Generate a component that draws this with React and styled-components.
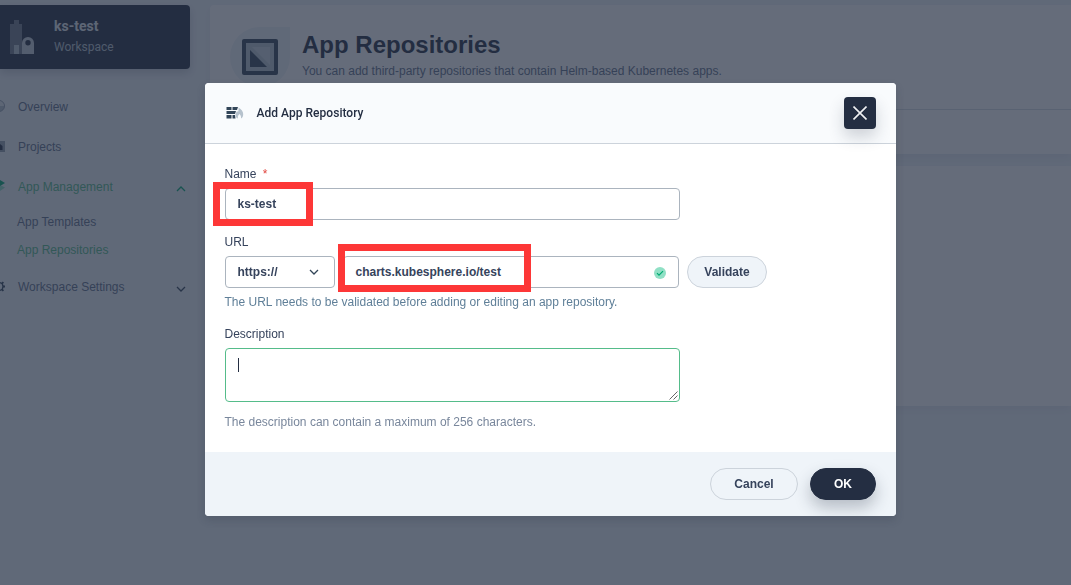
import React from 'react';
import styled, { createGlobalStyle } from 'styled-components';

const arial = '"Liberation Sans", Arial, sans-serif';
const roboto = 'Roboto, "Liberation Sans", sans-serif';

const GlobalStyle = createGlobalStyle`
  *, *::before, *::after { box-sizing: border-box; }
  body { margin: 0; overflow: hidden; background: #eff4f9; font-family: ${arial}; font-size: 12px; color: #242e42; }
  button, input, textarea { font: inherit; margin: 0; }
  svg { display: block; flex: none; }
  h1, p { margin: 0; }
`;

const Page = styled.div`
  display: grid;
  grid-template-columns: 190px 1fr;
  column-gap: 20px;
  height: 585px;
  padding-top: 5px;
  overflow: hidden;
`;
const Sidebar = styled.aside`
  display: flex;
  flex-direction: column;
`;
const Workspace = styled.div`
  display: flex;
  align-items: center;
  height: 64px;
  padding-left: 10px;
  gap: 20px;
  border-radius: 0 4px 4px 0;
  background: #242e42;
  box-shadow: 0 4px 8px rgba(36, 46, 66, 0.2);
  color: #fff;
`;
const WorkspaceText = styled.div`
  display: flex;
  flex-direction: column;
  line-height: 20px;
  color: #b6c2cd;
  font-family: ${roboto};
`;
const WorkspaceName = styled.strong`
  margin-top: -1px;
  font: 700 14px/21px ${roboto};
  color: #e3e9ef;
`;
const Nav = styled.nav`
  display: flex;
  flex-direction: column;
  padding-top: 18px;
`;
const NavItem = styled.a`
  display: flex;
  align-items: center;
  height: 40px;
  padding-right: 4px;
  color: ${(p) => (p.$active ? '#55bc8a' : '#5f708a')};
`;
const NavIcon = styled.span`
  display: flex;
  width: 18px;
`;
const NavLabel = styled.span`
  flex: 1;
`;
const SubNav = styled.div`
  display: flex;
  flex-direction: column;
  padding: 1px 0 3px 17px;
`;
const SubItem = styled.a`
  height: 28px;
  line-height: 28px;
  color: ${(p) => (p.$active ? '#55bc8a' : '#5f708a')};
`;
const Main = styled.main`
  display: flex;
  flex-direction: column;
  gap: 12px;
`;
const Card = styled.section`
  height: ${(p) => p.$height}px;
  background: #fff;
  border-radius: 4px 0 0 4px;
  box-shadow: 0 4px 8px rgba(36, 46, 66, 0.06);
`;
const Banner = styled.div`
  display: flex;
  height: 105px;
  padding: 22px 20px 0;
  gap: 12px;
  border-bottom: 1px solid #d8dee5;
`;
const BannerIcon = styled.div`
  display: grid;
  place-items: center;
  width: 60px;
  height: 60px;
  border-radius: 30px 0 30px 30px;
  background: #eff4f9;
`;
const BannerTitle = styled.h1`
  padding-top: 2px;
  font: 700 24px/32px ${arial};
  color: #242e42;
`;
const BannerText = styled.p`
  line-height: 20px;
  color: #5f708a;
`;
const Mask = styled.div`
  position: fixed;
  inset: 0;
  background: rgba(36, 46, 66, 0.7);
`;
const Modal = styled.div`
  position: absolute;
  left: 205px;
  top: 83px;
  display: flex;
  flex-direction: column;
  width: 691px;
  height: 433px;
  border-radius: 4px;
  overflow: hidden;
  background: #fff;
  box-shadow: 0 4px 8px rgba(36, 46, 66, 0.2);
`;
const ModalHeader = styled.header`
  display: flex;
  align-items: center;
  flex: none;
  height: 61px;
  padding: 0 20px;
  border-bottom: 1px solid #ccd3db;
  background: #f9fbfd;
`;
const ModalTitle = styled.div`
  flex: 1;
  padding-left: 11.5px;
  font: 500 12px/20px ${roboto};
  letter-spacing: 0.03px;
`;
const CloseButton = styled.button`
  display: grid;
  place-items: center;
  width: 32px;
  height: 32px;
  padding: 0;
  border: 0;
  border-radius: 4px;
  background: #242e42;
  box-shadow: 0 8px 16px rgba(36, 46, 66, 0.2);
`;
const Form = styled.div`
  display: flex;
  flex: 1;
  flex-direction: column;
  padding: 20px 20px 0;
`;
const Field = styled.div`
  display: flex;
  flex: none;
  flex-direction: column;
  height: ${(p) => p.$height}px;
`;
const Label = styled.label`
  margin: 0 0 4px -0.5px;
  line-height: 20px;
  color: #36435c;
`;
const Required = styled.span`
  margin-left: 3px;
  color: #e0443e;
`;
const Help = styled.p`
  margin: ${(p) => p.$gap}px 0 0 -0.5px;
  line-height: 20px;
  color: ${(p) => p.$color};
`;
const Row = styled.div`
  display: flex;
`;
const InputBox = styled.div`
  display: flex;
  align-items: center;
  width: ${(p) => p.$width}px;
  height: 32px;
  margin-right: 8px;
  padding: 0 12px 0 11.5px;
  border: 1px solid #abb4be;
  border-radius: 4px;
  background: #fff;
  font-weight: 700;
  color: #36435c;
`;
const Value = styled.span`
  flex: 1;
`;
const TextArea = styled.div`
  display: flex;
  justify-content: space-between;
  align-items: flex-end;
  width: 455px;
  height: 54px;
  padding: 0 1px 1px 12px;
  border: 1px solid #55bc8a;
  border-radius: 4px;
`;
const Caret = styled.i`
  align-self: flex-start;
  width: 1px;
  height: 14px;
  margin-top: 9px;
  background: #242e42;
`;
const Button = styled.button`
  width: ${(p) => p.$width}px;
  height: 32px;
  padding: 0;
  border: 1px solid ${(p) => (p.$primary ? '#242e42' : '#ccd3db')};
  border-radius: 16px;
  background: ${(p) => (p.$primary ? '#242e42' : '#eff4f9')};
  box-shadow: ${(p) => (p.$primary ? '0 8px 16px rgba(36, 46, 66, 0.28)' : 'none')};
  color: ${(p) => (p.$primary ? '#fff' : '#36435c')};
  font-weight: 700;
`;
const ModalFooter = styled.footer`
  display: flex;
  align-items: center;
  justify-content: flex-end;
  flex: none;
  gap: 12px;
  height: 64px;
  padding-right: 20px;
  background: #eff4f9;
`;
const Highlight = styled.div`
  position: absolute;
  left: ${(p) => p.$x}px;
  top: ${(p) => p.$y}px;
  width: ${(p) => p.$w}px;
  height: ${(p) => p.$h}px;
  border: 7px solid #fd3737;
`;

const Chevron = ({ up, color }) => (
  <svg width="10" height="10" viewBox="0 -4 10 10" fill="none" stroke={color} strokeWidth="1.3">
    <path d={up ? 'M1 5 5 1l4 4' : 'M1 1l4 4 4-4'} />
  </svg>
);

export default function App() {
  return (
    <>
      <GlobalStyle />
      <Page>
        <Sidebar>
          <Workspace>
            <svg width="24" height="34" viewBox="0 0 24 34">
              <path d="M0 4h4V0h5v4h3v30H0z" fill="#6f7a8b" />
              <path d="M4 25h5v9H4z" fill="#b6c2cd" />
              <path fillRule="evenodd" d="M12 34V23a6 6 0 0 1 12 0v11zM18 20a2.7 2.7 0 1 0 0 5.4 2.7 2.7 0 0 0 0-5.4z" fill="#c4ccd5" />
            </svg>
            <WorkspaceText>
              <WorkspaceName>ks-test</WorkspaceName>
              <span>Workspace</span>
            </WorkspaceText>
          </Workspace>
          <Nav>
            <NavItem>
              <NavIcon>
                <svg width="6" height="14" viewBox="0 0 6 14">
                  <circle cx="-1" cy="6" r="5.500" fill="#b6c2cd" stroke="#94a1b0" />
                  <path d="M-1 1a5 5 0 0 1 5 5h-5z" fill="#e3e9ef" />
                </svg>
              </NavIcon>
              <NavLabel>Overview</NavLabel>
            </NavItem>
            <NavItem>
              <NavIcon>
                <svg width="6" height="12" viewBox="0 0 6 12">
                  <path d="M0 0h5v11H0z" fill="#94a1b0" />
                  <path d="M0 3l2.500 2v4H0z" fill="#242e42" />
                </svg>
              </NavIcon>
              <NavLabel>Projects</NavLabel>
            </NavItem>
            <NavItem $active>
              <NavIcon>
                <svg width="6" height="14" viewBox="0 0 6 14">
                  <path d="M0 5l5 2.500L0 11z" fill="#90e0c5" />
                  <path d="M0 0l5 3-5 3z" fill="#00aa72" />
                </svg>
              </NavIcon>
              <NavLabel>App Management</NavLabel>
              <Chevron up color="#00aa72" />
            </NavItem>
            <SubNav>
              <SubItem>App Templates</SubItem>
              <SubItem $active>App Repositories</SubItem>
            </SubNav>
            <NavItem>
              <NavIcon>
                <svg width="6" height="14" viewBox="0 0 6 14" fill="none" stroke="#324558">
                  <circle cx="-1" cy="6.500" r="4" strokeWidth="1.4" />
                  <path d="M3 6.500h2M1.800 3.700l1.600-1.600M1.800 9.300l1.600 1.600" strokeWidth="1.800" />
                </svg>
              </NavIcon>
              <NavLabel>Workspace Settings</NavLabel>
              <Chevron color="#324558" />
            </NavItem>
          </Nav>
        </Sidebar>
        <Main>
          <Card $height={149}>
            <Banner>
              <BannerIcon>
                <svg width="36" height="36" viewBox="0 0 36 36">
                  <rect width="36" height="36" rx="2" fill="#324558" />
                  <path d="M4 4h28v28H4z" fill="#b6c2cd" />
                  <path d="M10 8h18v18z" fill="#c9d3dc" />
                  <path d="M8 11v17h17z" fill="#324558" />
                </svg>
              </BannerIcon>
              <div>
                <BannerTitle>App Repositories</BannerTitle>
                <BannerText>You can add third-party repositories that contain Helm-based Kubernetes apps.</BannerText>
              </div>
            </Banner>
          </Card>
          <Card $height={240} />
        </Main>
      </Page>
      <Mask />
      <Modal>
        <ModalHeader>
          <svg width="20" height="20" viewBox="0 0 20 20">
            <path d="M1.500 4h5v3h-5zM7.500 4h5.500l-1 3h-4.500zM1.500 8h9.500l-1 3h-8.500zM1.500 12h5v3.500h-5zM7.500 12h2.500l.5 3.500h-3z" fill="#324558" />
            <path d="M13.500 4.500c3 2 4.700 4 4.700 6.500 0 2-.5 3.500-2.200 4.500.3-2-.3-3-1.500-4.500-1.500 1.500-2 2.500-1.500 4.500-1.700-.5-2.500-2-2.500-3.500 0-2 1-2.500 1.500-4l1 1C13.500 7.700 13.800 6.200 13.500 4.500z" fill="#b6c2cd" />
          </svg>
          <ModalTitle>Add App Repository</ModalTitle>
          <CloseButton aria-label="Close">
            <svg width="14" height="14" viewBox="0 0 14 14" stroke="#f0f1f3" strokeWidth="1.6">
              <path d="M.5.5l13 13M13.500.5l-13 13" />
            </svg>
          </CloseButton>
        </ModalHeader>
        <Form>
          <Field $height={68}>
            <Label>Name <Required>*</Required></Label>
            <InputBox $width={455}>ks-test</InputBox>
          </Field>
          <Field $height={92}>
            <Label>URL</Label>
            <Row>
              <InputBox $width={110}>
                <Value>https://</Value>
                <svg width="16" height="16" viewBox="0 0 16 16" fill="none" stroke="#324558" strokeWidth="1.3">
                  <path d="M4 6l4 4 4-4" />
                </svg>
              </InputBox>
              <InputBox $width={336}>
                <Value>charts.kubesphere.io/test</Value>
                <svg width="12" height="14" viewBox="0 -2 12 14">
                  <circle cx="6" cy="6" r="6" fill="#90e0c5" />
                  <path d="M3 6.200l2 2 4-4" fill="none" stroke="#00aa72" strokeWidth="1.2" />
                </svg>
              </InputBox>
              <Button $width={80}>Validate</Button>
            </Row>
            <Help $gap={4} $color="#5f7f98">The URL needs to be validated before adding or editing an app repository.</Help>
          </Field>
          <Field $height={110}>
            <Label>Description</Label>
            <TextArea>
              <Caret />
              <svg width="9" height="9" viewBox="0 0 9 9" stroke="#555" strokeWidth="0.9">
                <path d="M.5 8.500l8-8M4.500 8.500l4-4" />
              </svg>
            </TextArea>
            <Help $gap={10} $color="#79879c">The description can contain a maximum of 256 characters.</Help>
          </Field>
        </Form>
        <ModalFooter>
          <Button $width={88}>Cancel</Button>
          <Button $width={66} $primary>OK</Button>
        </ModalFooter>
      </Modal>
      <Highlight $x={213} $y={182} $w={100} $h={44} />
      <Highlight $x={338} $y={244} $w={193} $h={48} />
    </>
  );
}
